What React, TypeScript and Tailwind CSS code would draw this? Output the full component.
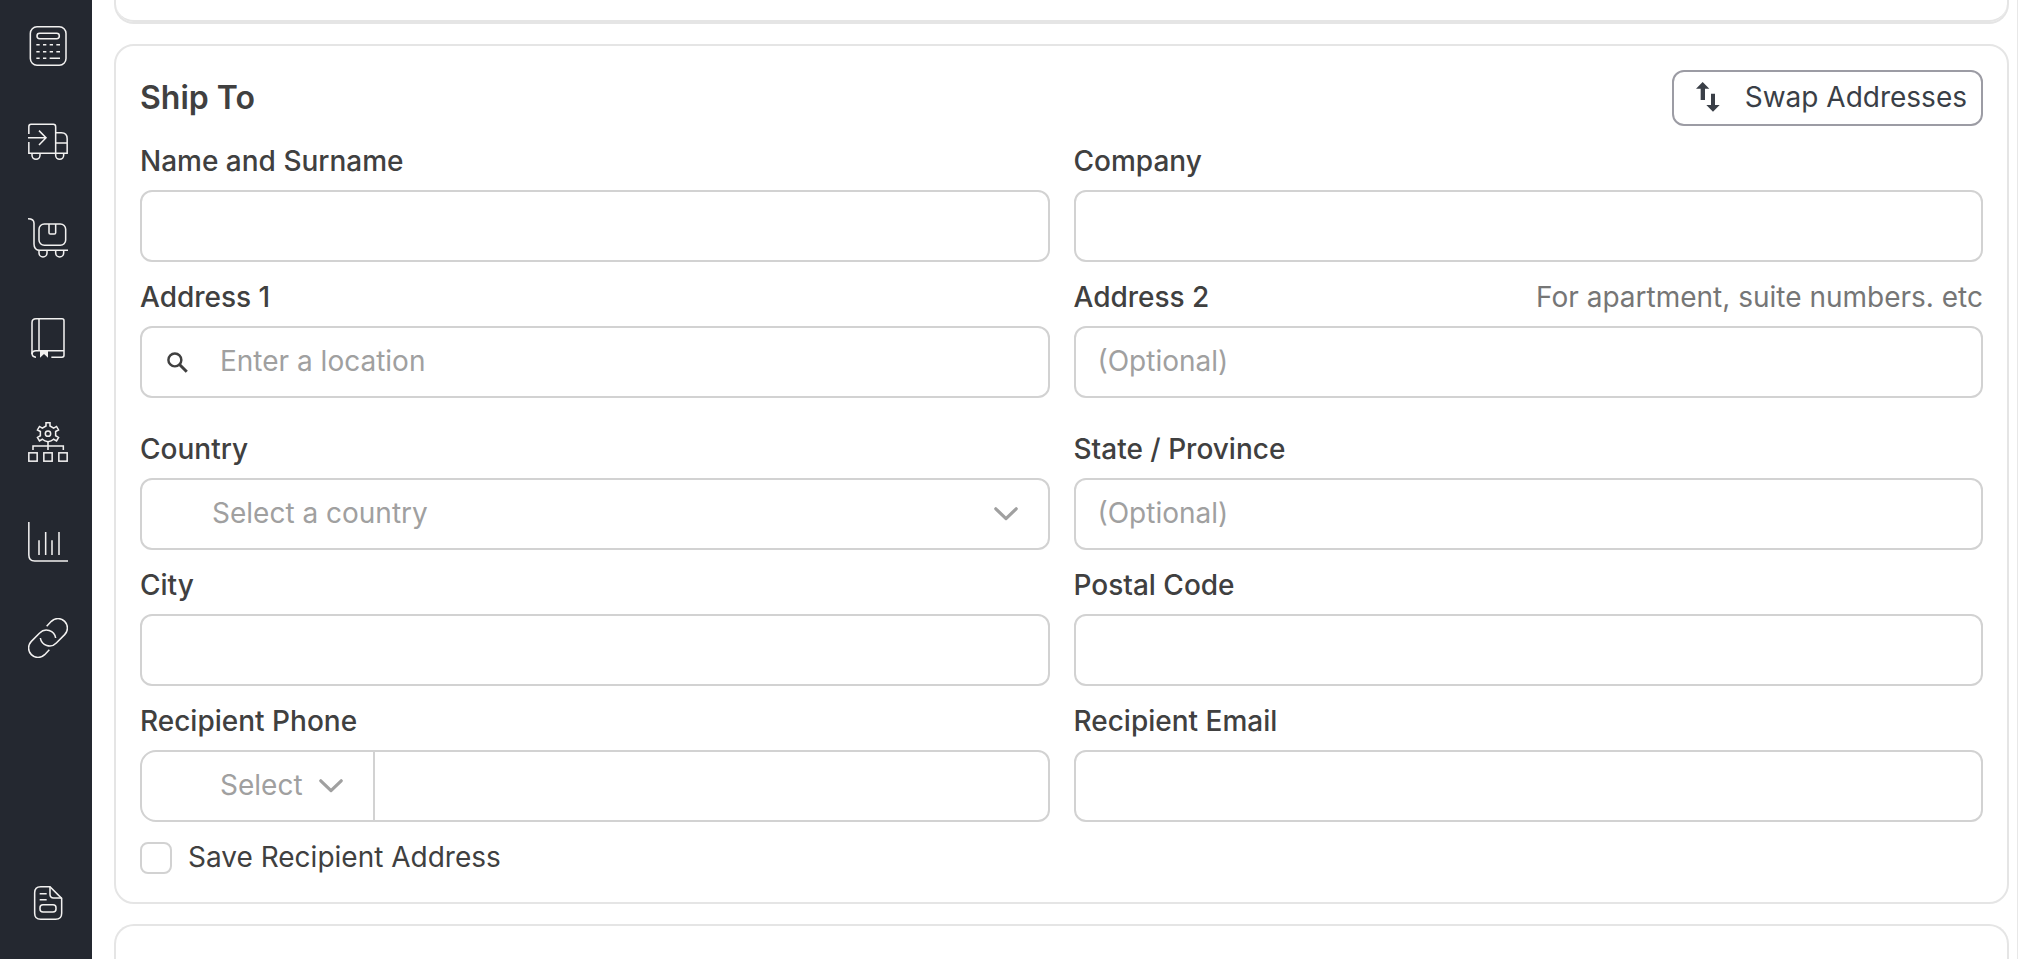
import React, { useId } from "react";

type IconProps = { children: React.ReactNode };

function NavIcon({ children }: IconProps) {
  return (
    <svg
      viewBox="0 0 120 120"
      className="size-10"
      fill="none"
      stroke="currentColor"
      strokeWidth="4.6"
      aria-hidden="true"
    >
      {children}
    </svg>
  );
}

const navItems: { label: string; className: string; icon: React.ReactNode }[] = [
  {
    label: "Rate calculator",
    className: "block",
    icon: (
      <>
        <rect x="7" y="2.5" width="107" height="115" rx="20" />
        <rect x="27" y="22" width="67" height="16" rx="8" />
        <path d="M25 56H35M45 56H55M65 56H75M85 56H96M25 77H35M45 77H55M65 77H75M85 77H96M25 97H35M45 97H55M65 97H96" />
      </>
    ),
  },
  {
    label: "Shipments",
    className: "block",
    icon: (
      <>
        <path d="M2.5 36V14Q2.5 7 9 7H76Q83 7 83 14V94" />
        <path d="M2.5 60V94H117.5V50Q117.5 32 100 32H83M83 63H118" />
        <path d="M12 94V100A12 12 0 0 0 36 100V94M83 94V100A12 12 0 0 0 107 100V94" />
        <path d="M0 47H54M33 26L54 47L33 69" />
      </>
    ),
  },
  {
    label: "Pickups",
    className: "block",
    icon: (
      <>
        <path d="M0 2.5Q18 2.5 18 16V78Q18 97 36 97H120" />
        <rect x="33" y="18" width="80" height="64" rx="16" />
        <path d="M63 18V44Q63 48 67 48H79Q83 48 83 44V18" />
        <path d="M33 97V105A12 12 0 0 0 57 105V97M83 97V105A12 12 0 0 0 107 105V97" />
      </>
    ),
  },
  {
    label: "Address book",
    className: "block py-1",
    icon: (
      <>
        <path d="M24 117.5Q12 117.5 12 106V14Q12 2.5 24 2.5H102Q108 2.5 108 8V112Q108 117.5 102 117.5H70" />
        <path d="M33 2V98M12 108Q12 98 24 98H108" />
        <path d="M36 98H60V119L48 108L36 119Z" fill="currentColor" stroke="none" />
      </>
    ),
  },
  {
    label: "Integrations",
    className: "block py-1",
    icon: (
      <>
        <path d="M54 12V2.5H66V12L76.9 18.3L85.6 13.3L91.6 23.7L82.9 28.7V41.3L91.6 46.3L85.6 56.7L76.9 51.7Q70 58 60 59Q50 58 43.1 51.7L34.4 56.7L28.4 46.3L37.1 41.3V28.7L28.4 23.7L34.4 13.3L43.1 18.3Z" />
        <circle cx="60" cy="35" r="8" />
        <path d="M60 59V84M15 84V72H106V84" />
        <rect x="2.5" y="92.5" width="25" height="25" />
        <rect x="47.5" y="92.5" width="25" height="25" />
        <rect x="92.5" y="92.5" width="25" height="25" />
      </>
    ),
  },
  {
    label: "Reports",
    className: "block",
    icon: <path d="M2.5 0V99Q2.5 117 20 117H120M33 55V99M53 30V99M72 55V99M93 30V99" />,
  },
  {
    label: "Connections",
    className: "block",
    icon: (
      <path d="M56 25L70 10A28 28 0 0 1 110 50L85 75A28 28 0 0 1 37 60M64 95L50 110A28 28 0 0 1 10 70L35 45A28 28 0 0 1 83 60" />
    ),
  },
];

function Sidebar() {
  return (
    <nav className="flex w-[92px] shrink-0 flex-col items-center justify-between bg-[#242830] pt-[26px] pb-9 pl-1 text-[#f2f1f0]">
      <div className="flex flex-col gap-14">
        {navItems.map((item) => (
          <a key={item.label} href="#" aria-label={item.label} className={item.className}>
            <NavIcon>{item.icon}</NavIcon>
          </a>
        ))}
      </div>
      <a href="#" aria-label="Documents" className="block">
        <NavIcon>
          <path d="M66 11H38Q20 11 20 29V91Q20 109 38 109H83Q101 109 101 91V46Z" />
          <path d="M66 11V34Q66 45 77 45H101M35 32H56M35 50H56" />
          <rect x="36" y="65" width="48" height="22" rx="9" />
        </NavIcon>
      </a>
    </nav>
  );
}

const inputClass =
  "h-[72px] w-full rounded-xl border-2 border-[#d2d2d2] bg-white px-[22px] pb-[2px] text-[28px] text-[#404040] outline-none placeholder:text-[#a0a0a0]";
const labelClass = "text-[28px] leading-[42px] font-medium text-[#404040]";

type FieldProps = {
  label: string;
  placeholder?: string;
  hint?: string;
  type?: string;
};

function Field({ label, placeholder, hint, type = "text" }: FieldProps) {
  const id = useId();
  return (
    <div className="flex flex-col gap-2">
      <div className="flex items-baseline justify-between gap-4">
        <label htmlFor={id} className={labelClass}>
          {label}
        </label>
        {hint && <span className="text-[28px] leading-[42px] text-[#767676]">{hint}</span>}
      </div>
      <input id={id} type={type} placeholder={placeholder} className={inputClass} />
    </div>
  );
}

function Chevron({ className }: { className: string }) {
  return (
    <svg
      viewBox="0 0 24 14"
      className={className}
      fill="none"
      stroke="#a0a0a0"
      strokeWidth="3.2"
      aria-hidden="true"
    >
      <path d="M1.8 1.8L12 11.6L22.2 1.8" strokeLinecap="round" strokeLinejoin="round" />
    </svg>
  );
}

function AddressField() {
  return (
    <div className="flex flex-col gap-2">
      <label htmlFor="address1" className={labelClass}>
        Address 1
      </label>
      <div className="flex h-[72px] items-center rounded-xl border-2 border-[#d2d2d2] bg-white">
        <svg
          viewBox="0 0 24 24"
          className="mr-6 ml-[25px] size-[21px] shrink-0"
          fill="none"
          stroke="#404040"
          strokeWidth="2.8"
          aria-hidden="true"
        >
          <circle cx="9" cy="9" r="7.4" />
          <path d="M14 14L22.6 22.6" strokeWidth="3.4" />
        </svg>
        <input
          id="address1"
          type="text"
          placeholder="Enter a location"
          className="h-full min-w-0 flex-1 rounded-xl bg-transparent pb-[2px] pl-2 text-[28px] text-[#404040] outline-none placeholder:text-[#a0a0a0]"
        />
      </div>
    </div>
  );
}

function CountryField() {
  return (
    <div className="flex flex-col gap-2">
      <label htmlFor="country" className={labelClass}>
        Country
      </label>
      <div className="relative">
        <select
          id="country"
          className="h-[72px] w-full appearance-none rounded-xl border-2 border-[#d2d2d2] bg-white pr-16 pb-[2px] pl-[70px] text-[28px] text-[#a0a0a0] outline-none"
        >
          <option>Select a country</option>
        </select>
        <Chevron className="pointer-events-none absolute top-[29px] right-8 h-[14px] w-6" />
      </div>
    </div>
  );
}

function PhoneField() {
  return (
    <div className="flex flex-col gap-2">
      <label htmlFor="phone" className={labelClass}>
        Recipient Phone
      </label>
      <div className="flex h-[72px] rounded-l-2xl rounded-r-xl border-2 border-[#d2d2d2] bg-white">
        <div className="relative w-[233px] shrink-0 border-r-2 border-[#d2d2d2]">
          <select
            aria-label="Country code"
            className="h-full w-full appearance-none rounded-l-2xl bg-transparent pb-[2px] pl-[78px] text-[28px] text-[#a0a0a0] outline-none"
          >
            <option>Select</option>
          </select>
          <Chevron className="pointer-events-none absolute top-[27px] right-[30px] h-[14px] w-6" />
        </div>
        <input
          id="phone"
          type="tel"
          className="min-w-0 flex-1 rounded-r-xl bg-transparent px-[22px] text-[28px] text-[#404040] outline-none"
        />
      </div>
    </div>
  );
}

function Row({ children }: { children: React.ReactNode }) {
  return <div className="grid grid-cols-2 gap-6">{children}</div>;
}

export default function App() {
  return (
    <div className="flex min-h-screen bg-white font-['Inter',sans-serif]">
      <Sidebar />
      <main className="flex min-w-0 flex-1 flex-col gap-5 border-r border-[#e8e8e8] pr-2 pl-[22px]">
        <section className="h-6 rounded-b-[20px] border-2 border-t-0 border-[#e5e5e5]">
          <div className="h-full rounded-b-[18px] border-b-2 border-[#e5e5e5]" />
        </section>

        <form className="flex flex-col gap-[14px] rounded-[20px] border-2 border-[#e5e5e5] px-6 pt-6 pb-7">
          <div className="flex items-center justify-between">
            <h2 className="text-[32px] leading-[48px] font-semibold text-[#404040]">Ship To</h2>
            <button
              type="button"
              className="flex h-14 items-center gap-[25px] rounded-xl border-2 border-[#9c9ca4] pr-[14px] pb-[2px] pl-[22px] text-[28px] text-[#3a3f47]"
            >
              <svg viewBox="0 0 72 90" className="h-[30px] w-6" fill="currentColor" aria-hidden="true">
                <path d="M20 0L40 20H27V54H14V20H0ZM45 35H57V69H71L51 89L31 69H45Z" />
              </svg>
              Swap Addresses
            </button>
          </div>

          <Row>
            <Field label="Name and Surname" />
            <Field label="Company" />
          </Row>
          <div className="pb-4">
            <Row>
              <AddressField />
              <Field
                label="Address 2"
                placeholder="(Optional)"
                hint="For apartment, suite numbers. etc"
              />
            </Row>
          </div>
          <Row>
            <CountryField />
            <Field label="State / Province" placeholder="(Optional)" />
          </Row>
          <Row>
            <Field label="City" />
            <Field label="Postal Code" />
          </Row>
          <Row>
            <PhoneField />
            <Field label="Recipient Email" type="email" />
          </Row>

          <div className="mt-[6px] flex items-center gap-4">
            <input
              id="save-recipient"
              type="checkbox"
              className="size-8 appearance-none rounded-lg border-2 border-[#d2d2d2] bg-white checked:bg-[#404040]"
            />
            <label
              htmlFor="save-recipient"
              className="pb-[2px] text-[28px] leading-[30px] text-[#404040]"
            >
              Save Recipient Address
            </label>
          </div>
        </form>

        <section className="min-h-8 flex-1 rounded-t-[20px] border-2 border-b-0 border-[#e5e5e5]" />
      </main>
    </div>
  );
}
